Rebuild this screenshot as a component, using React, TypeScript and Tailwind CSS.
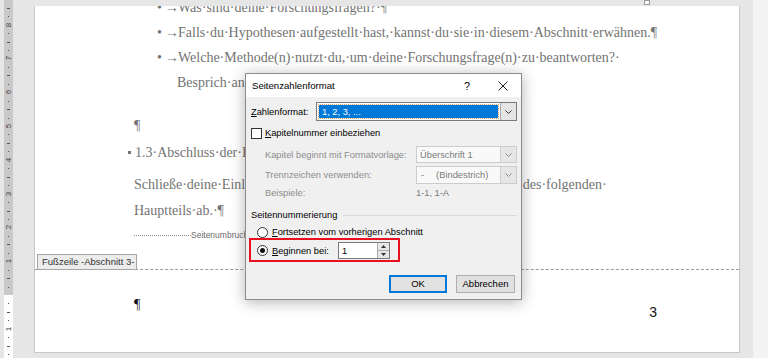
import React from 'react';

const RULER_ZERO = 295;
const RULER_STEP = 8.45;

export default function App() {
    return (
        <div className="relative flex h-[358px] w-[768px] overflow-hidden bg-[#e6e6e6]">
            <VerticalRuler />
            <div className="w-[706px] shrink-0 pt-[6px]">
                <Page />
            </div>
            <div className="w-[13px] shrink-0" />
            <div className="flex-1 bg-[#f3f3f3]" />

            {/* small anchor marker at the top edge */}
            <div className="absolute left-[644px] top-0 h-[5px] w-[6px] border border-[#9a9a9a] bg-white" />

            <PageNumberDialog />
        </div>
    );
}

function VerticalRuler() {
    const marks: { y: number; kind: 'num' | 'dash' | 'dot'; label?: string }[] = [];
    for (let i = -35; i <= 7; i++) {
        if (i === 0) continue;
        const y = RULER_ZERO + i * RULER_STEP;
        if (i % 4 === 0) marks.push({ y, kind: 'num', label: String(Math.abs(i / 4)) });
        else if (i % 2 === 0) marks.push({ y, kind: 'dash' });
        else marks.push({ y, kind: 'dot' });
    }

    return (
        <div className="w-[34px] shrink-0">
            <div className="relative ml-[4px] flex h-full w-[9px] flex-col">
                <div className="h-[295px] shrink-0 bg-[#c9c9c9]" />
                <div className="flex-1 bg-white" />
                {marks.map((m, idx) =>
                    m.kind === 'num' ? (
                        <span
                            key={idx}
                            className="absolute left-0 w-[9px] -rotate-90 text-center font-['Liberation_Sans',sans-serif] text-[8px] leading-[8px] text-[#444]"
                            style={{ top: m.y - 4 }}
                        >
                            {m.label}
                        </span>
                    ) : m.kind === 'dash' ? (
                        <span key={idx} className="absolute left-[3px] h-px w-[3px] bg-[#555]" style={{ top: m.y }} />
                    ) : (
                        <span key={idx} className="absolute left-[4px] h-px w-px bg-[#555]" style={{ top: m.y }} />
                    )
                )}
            </div>
        </div>
    );
}

function BulletLine({ text }: { text: string }) {
    return (
        <div className="flex whitespace-nowrap pl-[122px] leading-[25px]">
            <span className="w-[8px]">•</span>
            <span className="w-[13px]">→</span>
            <span>{text}</span>
        </div>
    );
}

function Page() {
    return (
        <div className="relative flex h-[347px] flex-col overflow-hidden border border-t-0 border-[#c8c8c8] bg-white font-['Liberation_Serif','Times_New_Roman',serif] text-[14px] text-[#737373]">
            {/* body (dimmed while the footer is edited) */}
            <div className="h-[264px] shrink-0 border-b border-dashed border-[#9a9a9a]">
                <div className="mt-[-11px]">
                    <BulletLine text="Was·sind·deine·Forschungsfragen?·¶" />
                    <BulletLine text="Falls·du·Hypothesen·aufgestellt·hast,·kannst·du·sie·in·diesem·Abschnitt·erwähnen.¶" />
                    <BulletLine text="Welche·Methode(n)·nutzt·du,·um·deine·Forschungsfrage(n)·zu·beantworten?·" />
                    <div className="whitespace-nowrap pl-[142px] leading-[25px]">Besprich·anschließend·kurz·das·Vorgehen.¶</div>
                    <div className="mt-[18px] pl-[99px] leading-[25px]">¶</div>
                    <div className="mt-[2px] flex items-center whitespace-nowrap pl-[93px] leading-[25px]">
                        <span className="mr-[4px] inline-block h-[3px] w-[3px] bg-[#737373]" />
                        1.3·Abschluss·der·Einleitung¶
                    </div>
                    <div className="mt-[7px] whitespace-nowrap pl-[99px] leading-[25px]">
                        Schließe·deine·Einleitung·so·mit·einer·Überleitung·zu·den·Inhalten·des·folgenden·
                    </div>
                    <div className="mt-[1px] whitespace-nowrap pl-[99px] leading-[25px]">Hauptteils·ab.·¶</div>
                    <div className="mt-[6px] flex h-[12px] items-center pl-[99px]">
                        <span className="w-[57px] border-t border-dotted border-[#8a8a8a]" />
                        <span className="whitespace-nowrap font-['Liberation_Sans',sans-serif] text-[8.5px] text-[#6e6e6e]">Seitenumbruch (nächste Seite)</span>
                    </div>
                </div>
            </div>

            {/* footer */}
            <div className="flex items-start">
                <span className="mt-[22px] pl-[99px] leading-[25px] text-[#111]">¶</span>
                <span className="ml-auto mr-[82px] mt-[34px] font-['Liberation_Sans',sans-serif] text-[14px] leading-[16px] text-[#111]">3</span>
            </div>

            <div className="absolute left-[2px] top-[248px] flex h-[16px] w-[100px] items-center whitespace-nowrap border border-[#a6a6a6] bg-[#ececec] pl-[4px] font-['Liberation_Sans',sans-serif] text-[9.5px] text-[#333]">
                Fußzeile -Abschnitt 3-
            </div>
        </div>
    );
}

function Chevron({ color = '#333' }: { color?: string }) {
    return (
        <svg width="7" height="4" viewBox="0 0 7 4">
            <polyline points="0.5,0.5 3.5,3.5 6.5,0.5" fill="none" stroke={color} strokeWidth="1" />
        </svg>
    );
}

function DropButton({ disabled }: { disabled?: boolean }) {
    return (
        <div
            className={
                disabled
                    ? 'flex w-[16px] shrink-0 items-center justify-center border-l border-[#cccccc] bg-[#e6e6e6]'
                    : 'flex w-[16px] shrink-0 items-center justify-center border-l border-[#adadad] bg-[#e5e5e5]'
            }
        >
            <Chevron color={disabled ? '#8a8a8a' : '#333'} />
        </div>
    );
}

function Radio({ checked }: { checked?: boolean }) {
    return (
        <span className="flex h-[11px] w-[11px] shrink-0 items-center justify-center rounded-full border border-[#333] bg-white">
            {checked && <span className="h-[5px] w-[5px] rounded-full bg-[#111]" />}
        </span>
    );
}

function PageNumberDialog() {
    return (
        <div className="absolute left-[245px] top-[73px] flex h-[227px] w-[277px] flex-col whitespace-nowrap border border-[#8c8c8c] bg-[#f0f0f0] font-['Liberation_Sans',Arial,sans-serif] text-[9.3px] leading-[12px] text-black shadow-[0_2px_14px_rgba(0,0,0,0.3)]">
            {/* title bar */}
            <div className="flex h-[23px] shrink-0 items-center bg-white pl-[6px]">
                <span className="flex-1 text-[9.6px]">Seitenzahlenformat</span>
                <span className="w-[36px] text-center text-[11px]">?</span>
                <span className="flex w-[36px] justify-center">
                    <svg width="10" height="10" viewBox="0 0 10 10">
                        <path d="M0.5 0.5 L9.5 9.5 M9.5 0.5 L0.5 9.5" stroke="#222" strokeWidth="1" />
                    </svg>
                </span>
            </div>

            <div className="flex flex-1 flex-col pl-[5px] pr-[4px] pt-[5px]">
                {/* Zahlenformat */}
                <div className="flex h-[19px] items-center">
                    <span className="w-[65px] shrink-0">
                        <span className="underline">Z</span>ahlenformat:
                    </span>
                    <div className="flex h-full flex-1 border border-[#7a7a7a] bg-white">
                        <div className="m-[2px] flex flex-1 items-center bg-[#0078d7] pl-[3px] text-white outline-1 outline-dotted outline-[#e0a060]">
                            1, 2, 3, ...
                        </div>
                        <DropButton />
                    </div>
                </div>

                {/* Kapitelnummer */}
                <div className="mt-[5px] flex h-[14px] items-center">
                    <span className="h-[11px] w-[11px] shrink-0 border border-[#333] bg-white" />
                    <span className="ml-[3px]">
                        <span className="underline">K</span>apitelnummer einbeziehen
                    </span>
                </div>

                {/* disabled rows */}
                <div className="mt-[6px] flex h-[17px] items-center pl-[14px] text-[#8d8d8d]">
                    <span className="w-[151px] shrink-0">Kapitel beginnt mit Formatvorlage:</span>
                    <div className="flex h-full flex-1 border border-[#cccccc] bg-[#f9f9f9]">
                        <span className="flex flex-1 items-center pl-[3px] text-[#7a7a7a]">Überschrift 1</span>
                        <DropButton disabled />
                    </div>
                </div>
                <div className="mt-[3px] flex h-[18px] items-center pl-[14px] text-[#8d8d8d]">
                    <span className="w-[151px] shrink-0">Trennzeichen verwenden:</span>
                    <div className="flex h-full flex-1 border border-[#cccccc] bg-[#f9f9f9]">
                        <span className="flex flex-1 items-center pl-[4px] text-[#7a7a7a]">
                            -<span className="ml-[12px]">(Bindestrich)</span>
                        </span>
                        <DropButton disabled />
                    </div>
                </div>
                <div className="mt-[2px] flex h-[14px] items-center pl-[14px] text-[#8d8d8d]">
                    <span className="w-[151px] shrink-0">Beispiele:</span>
                    <span className="text-[#7a7a7a]">1-1, 1-A</span>
                </div>

                {/* Seitennummerierung */}
                <div className="mt-[8px] flex h-[14px] items-center">
                    <span>Seitennummerierung</span>
                    <span className="ml-[6px] h-px flex-1 bg-[#dadada]" />
                </div>
                <div className="mt-[3px] flex h-[14px] items-center pl-[6px]">
                    <Radio />
                    <span className="ml-[4px]">
                        <span className="underline">F</span>ortsetzen vom vorherigen Abschnitt
                    </span>
                </div>
                <div className="mt-[3px] flex h-[17px] items-center pl-[6px]">
                    <Radio checked />
                    <span className="ml-[4px] w-[66px] shrink-0">
                        <span className="underline">B</span>eginnen bei:
                    </span>
                    <div className="flex h-full w-[52px] border border-[#7a7a7a] bg-white">
                        <span className="flex flex-1 items-center pl-[3px]">1</span>
                        <div className="flex w-[12px] flex-col border-l border-[#adadad] bg-[#e6e6e6]">
                            <span className="flex flex-1 items-center justify-center border-b border-[#adadad]">
                                <svg width="5" height="3" viewBox="0 0 5 3"><polygon points="2.5,0 5,3 0,3" fill="#333" /></svg>
                            </span>
                            <span className="flex flex-1 items-center justify-center">
                                <svg width="5" height="3" viewBox="0 0 5 3"><polygon points="0,0 5,0 2.5,3" fill="#333" /></svg>
                            </span>
                        </div>
                    </div>
                </div>

                {/* buttons */}
                <div className="mt-[16px] flex justify-end gap-[9px] pr-[2px]">
                    <button className="h-[18px] w-[58px] border border-[#0078d7] bg-[#e1e1e1] text-[9.5px] shadow-[inset_0_0_0_1px_#0078d7]">
                        OK
                    </button>
                    <button className="h-[18px] w-[59px] border border-[#adadad] bg-[#e1e1e1] text-[9.5px]">Abbrechen</button>
                </div>
            </div>

            {/* highlight around the start value */}
            <div className="absolute left-[3px] top-[164px] h-[24px] w-[151px] border-2 border-[#e8101e]" />
        </div>
    );
}
